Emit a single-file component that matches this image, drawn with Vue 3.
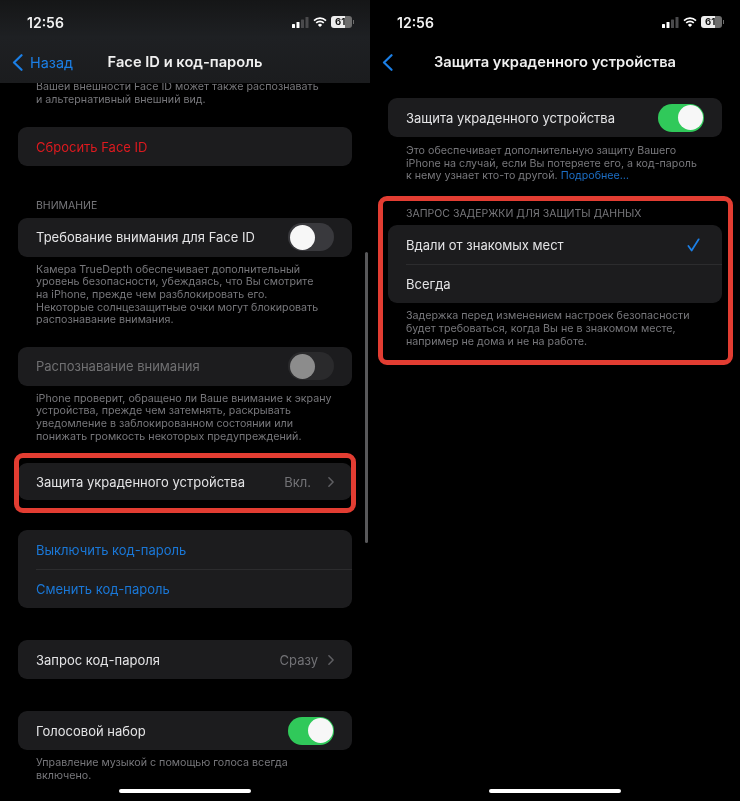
<template>
  <div class="screen">
    <section class="phone">
      <header class="nav tinted">
        <div class="status">
          <span class="time">12:56</span>
          <div class="status-icons">
            <svg width="17" height="11" viewBox="0 0 17 11">
              <rect x="0" y="7" width="3" height="4" rx="0.6" fill="#fff" />
              <rect x="4.5" y="5" width="3" height="6" rx="0.6" fill="#fff" />
              <rect x="9" y="2.5" width="3" height="8.5" rx="0.6" fill="#4a4a4c" />
              <rect x="13.5" y="0" width="3" height="11" rx="0.6" fill="#4a4a4c" />
            </svg>
            <svg width="14" height="10" viewBox="0 0 14 10">
              <path d="M1 3.6a8.6 8.6 0 0 1 12 0M3.2 5.9a5.4 5.4 0 0 1 7.6 0" fill="none" stroke="#fff" stroke-width="1.6" />
              <path d="M7 10 4.9 7.9a3 3 0 0 1 4.2 0z" fill="#fff" />
            </svg>
            <div class="battery">61</div>
          </div>
        </div>
        <div class="nav-row">
          <a class="back">
            <svg width="11" height="17" viewBox="0 0 11 17"><path d="M9.5 1.2 2 8.5l7.5 7.3" fill="none" stroke="#1b7fe6" stroke-width="2.2" stroke-linecap="round" stroke-linejoin="round" /></svg>
            <span>Назад</span>
          </a>
          <h1>Face ID и код-пароль</h1>
          <span></span>
        </div>
      </header>

      <main class="content">
        <p class="note first">Вашей внешности Face ID может также распознавать<br />и альтернативный внешний вид.</p>

        <div class="card gap-21"><div class="row red">Сбросить Face ID</div></div>

        <h2 class="caption gap-34">ВНИМАНИЕ</h2>
        <div class="card">
          <div class="row">
            <span>Требование внимания для Face ID</span>
            <i class="toggle"></i>
          </div>
        </div>
        <p class="note">Камера TrueDepth обеспечивает дополнительный<br />уровень безопасности, убеждаясь, что Вы смотрите<br />на iPhone, прежде чем разблокировать его.<br />Некоторые солнцезащитные очки могут блокировать<br />распознавание внимания.</p>

        <div class="card gap-20">
          <div class="row disabled">
            <span>Распознавание внимания</span>
            <i class="toggle dim"></i>
          </div>
        </div>
        <p class="note">iPhone проверит, обращено ли Ваше внимание к экрану<br />устройства, прежде чем затемнять, раскрывать<br />уведомление в заблокированном состоянии или<br />понижать громкость некоторых предупреждений.</p>

        <div class="card gap-20 short">
          <div class="row">
            <span>Защита украденного устройства</span>
            <span class="value">Вкл.<svg width="6" height="10" viewBox="0 0 7 12"><path d="M1 1l5 5-5 5" fill="none" stroke="#5f5f63" stroke-width="1.8" stroke-linecap="round" stroke-linejoin="round" /></svg></span>
          </div>
        </div>

        <div class="card gap-30">
          <div class="row blue">Выключить код-пароль</div>
          <div class="row blue divided">Сменить код-пароль</div>
        </div>

        <div class="card gap-32">
          <div class="row">
            <span>Запрос код-пароля</span>
            <span class="value tight">Сразу<svg width="6" height="10" viewBox="0 0 7 12"><path d="M1 1l5 5-5 5" fill="none" stroke="#5f5f63" stroke-width="1.8" stroke-linecap="round" stroke-linejoin="round" /></svg></span>
          </div>
        </div>

        <div class="card gap-32">
          <div class="row">
            <span>Голосовой набор</span>
            <i class="toggle on"></i>
          </div>
        </div>
        <p class="note">Управление музыкой с помощью голоса всегда<br />включено.</p>
      </main>

      <div class="scrollbar"></div>
      <div class="callout left"></div>
      <div class="home"></div>
    </section>

    <section class="phone">
      <header class="nav">
        <div class="status">
          <span class="time">12:56</span>
          <div class="status-icons">
            <svg width="17" height="11" viewBox="0 0 17 11">
              <rect x="0" y="7" width="3" height="4" rx="0.6" fill="#fff" />
              <rect x="4.5" y="5" width="3" height="6" rx="0.6" fill="#fff" />
              <rect x="9" y="2.5" width="3" height="8.5" rx="0.6" fill="#4a4a4c" />
              <rect x="13.5" y="0" width="3" height="11" rx="0.6" fill="#4a4a4c" />
            </svg>
            <svg width="14" height="10" viewBox="0 0 14 10">
              <path d="M1 3.6a8.6 8.6 0 0 1 12 0M3.2 5.9a5.4 5.4 0 0 1 7.6 0" fill="none" stroke="#fff" stroke-width="1.6" />
              <path d="M7 10 4.9 7.9a3 3 0 0 1 4.2 0z" fill="#fff" />
            </svg>
            <div class="battery">61</div>
          </div>
        </div>
        <div class="nav-row">
          <a class="back">
            <svg width="11" height="17" viewBox="0 0 11 17"><path d="M9.5 1.2 2 8.5l7.5 7.3" fill="none" stroke="#1b7fe6" stroke-width="2.2" stroke-linecap="round" stroke-linejoin="round" /></svg>
          </a>
          <h1>Защита украденного устройства</h1>
          <span></span>
        </div>
      </header>

      <main class="content plain">
        <div class="card">
          <div class="row">
            <span>Защита украденного устройства</span>
            <i class="toggle on"></i>
          </div>
        </div>
        <p class="note low">Это обеспечивает дополнительную защиту Вашего<br />iPhone на случай, если Вы потеряете его, а код-пароль<br />к нему узнает кто-то другой. <span class="link">Подробнее…</span></p>

        <h2 class="caption gap-25">ЗАПРОС ЗАДЕРЖКИ ДЛЯ ЗАЩИТЫ ДАННЫХ</h2>
        <div class="card">
          <div class="row">
            <span>Вдали от знакомых мест</span>
            <svg class="check" width="13" height="14" viewBox="0 0 14 15"><path d="M1.5 8.6 5 13.4 12.6 1.4" fill="none" stroke="#1b7fe6" stroke-width="1.9" stroke-linecap="round" stroke-linejoin="round" /></svg>
          </div>
          <div class="row divided">Всегда</div>
        </div>
        <p class="note">Задержка перед изменением настроек безопасности<br />будет требоваться, когда Вы не в знакомом месте,<br />например не дома и не на работе.</p>
      </main>

      <div class="callout right"></div>
      <div class="home"></div>
    </section>
  </div>
</template>

<script setup>
</script>

<style>
html,
body {
  margin: 0;
  background: #000;
}
</style>

<style scoped>
.screen {
  display: grid;
  grid-template-columns: 370px 370px;
  width: 740px;
  height: 801px;
  overflow: hidden;
  background: #000;
  font-family: Inter, "Noto Sans", sans-serif;
  color: #e4e4e6;
  filter: blur(0.3px);
}

.phone {
  position: relative;
  height: 801px;
  overflow: hidden;
}

.nav {
  position: relative;
  z-index: 2;
  height: 83px;
  box-sizing: border-box;
  padding-top: 13px;
  background: #000;
}

.nav.tinted {
  background: linear-gradient(180deg, #151617 0%, #1e2023 45%, #1b1c1e 100%);
}

.status {
  display: flex;
  justify-content: space-between;
  align-items: center;
  height: 18px;
  padding: 0 18px 0 27px;
}

.time {
  font-size: 14px;
  font-weight: 600;
  color: #f2f2f2;
}

.status-icons {
  display: flex;
  align-items: center;
  gap: 4px;
}

.battery {
  position: relative;
  width: 21px;
  height: 12px;
  box-sizing: border-box;
  padding-left: 4px;
  border-radius: 3px;
  background: linear-gradient(90deg, #ededed 0 66%, #6d6d6d 66% 100%);
  color: #111;
  font-size: 9.5px;
  font-weight: 700;
  line-height: 12px;
}

.battery::after {
  content: "";
  position: absolute;
  right: -2px;
  top: 4px;
  width: 1px;
  height: 4px;
  background: #6d6d6d;
}

.nav-row {
  display: grid;
  grid-template-columns: 1fr auto 1fr;
  align-items: center;
  height: 20px;
  margin-top: 21px;
  padding-left: 12px;
  padding-right: 12px;
}

.back {
  display: flex;
  align-items: center;
  gap: 7px;
  color: #1b7fe6;
  font-size: 14.4px;
}

h1 {
  margin: 0;
  font-size: 14.7px;
  font-weight: 600;
  color: #f0f0f0;
}

.content {
  padding: 0 18px;
}

.content.plain {
  padding-top: 15px;
}

.card {
  background: #1c1c1e;
  border-radius: 9px;
  overflow: hidden;
}

.row {
  display: flex;
  justify-content: space-between;
  align-items: center;
  height: 39px;
  box-sizing: border-box;
  margin-left: 18px;
  padding-right: 18px;
  font-size: 13px;
}

.short .row {
  height: 37px;
}

.divided {
  border-top: 1px solid #2c2c2e;
}

.red {
  color: #dd1a1f;
}

.blue {
  color: #1a78d8;
}

.disabled {
  color: #707072;
}

.value {
  display: flex;
  align-items: center;
  gap: 17px;
  color: #727276;
}

.value.tight {
  gap: 10px;
}

.note {
  margin: 7px 0 0;
  padding-left: 18px;
  font-size: 10.7px;
  line-height: 12.6px;
  color: #77777b;
  white-space: nowrap;
}

.note.first {
  margin-top: -2px;
}

.note.low {
  margin-top: 8px;
}

.link {
  color: #1c6ec4;
}

.caption {
  margin: 0 0 5px;
  padding-left: 18px;
  font-size: 10.5px;
  font-weight: 400;
  line-height: 12.6px;
  color: #77777b;
}

.gap-20 { margin-top: 20px; }
.gap-21 { margin-top: 21px; }
.gap-25 { margin-top: 25px; }
.gap-30 { margin-top: 30px; }
.gap-32 { margin-top: 32px; }
.gap-34 { margin-top: 34px; }

.toggle {
  position: relative;
  display: block;
  flex: none;
  width: 46px;
  height: 28px;
  border-radius: 14px;
  background: #39393d;
}

.toggle::after {
  content: "";
  position: absolute;
  top: 1.5px;
  left: 1.5px;
  width: 25px;
  height: 25px;
  border-radius: 50%;
  background: #f7f7f7;
}

.toggle.dim {
  background: #2a2a2c;
}

.toggle.dim::after {
  background: #8c8c8c;
}

.toggle.on {
  background: #30c95a;
}

.toggle.on::after {
  left: 19.5px;
}

.check {
  margin-right: 4px;
}

.scrollbar {
  position: absolute;
  right: 2px;
  top: 252px;
  width: 3px;
  height: 291px;
  border-radius: 2px;
  background: #58585a;
}

.callout {
  position: absolute;
  box-sizing: border-box;
  border: 5px solid #e23d32;
  border-radius: 9px;
  z-index: 3;
}

.callout.left {
  left: 14px;
  top: 453px;
  width: 342px;
  height: 60px;
}

.callout.right {
  left: 8px;
  top: 196px;
  width: 355px;
  height: 169px;
}

.home {
  position: absolute;
  left: 119px;
  top: 789px;
  width: 132px;
  height: 4px;
  border-radius: 2px;
  background: #fff;
  z-index: 3;
}
</style>
